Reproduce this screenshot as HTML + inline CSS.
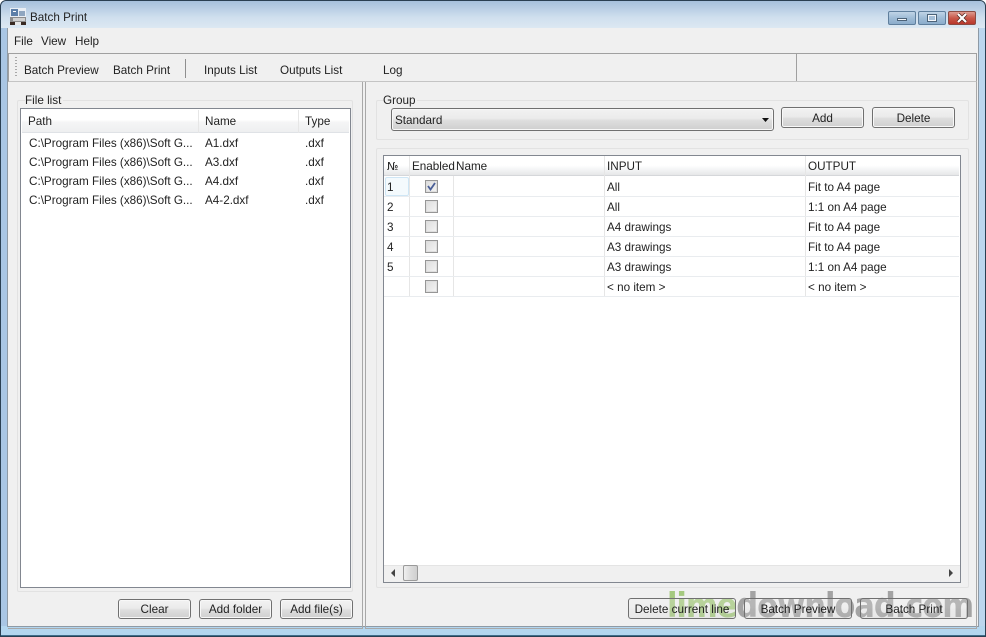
<!DOCTYPE html>
<html><head><meta charset="utf-8"><style>
*{box-sizing:border-box}
html,body{margin:0;padding:0;width:986px;height:637px;overflow:hidden;background:#fff}
body{position:relative;font:11.7px/14px "Liberation Sans","DejaVu Sans",sans-serif;color:#222}
div,span{position:absolute;white-space:nowrap}
.t{font-size:11.7px;line-height:14px;margin-top:1px}
.btn{border:1px solid #707070;border-radius:3px;background:linear-gradient(#f2f2f2 0,#ebebeb 45%,#dedede 55%,#cfcfcf 100%);text-align:center;font-size:11.7px;line-height:20px;height:20px;box-shadow:inset 0 0 0 1px #f8f8f8}
.wb{background:linear-gradient(rgba(242,242,242,.25),rgba(235,235,235,.25) 45%,rgba(222,222,222,.25) 55%,rgba(207,207,207,.25));box-shadow:none}
.box{border:1px solid #e2e2e2;border-radius:2px;background:#f0f0f0}
.hl{height:1px;background:#e9ecef}
.vl{width:1px;background:#e6e6e6}
.cb{width:13px;height:13px;border:1px solid #969696;background:linear-gradient(135deg,#dcdcdc,#f4f4f4);box-shadow:inset 0 0 0 1px #dedede}
</style></head><body>
<div style="left:0;top:0;width:986px;height:637px;border-radius:6px 6px 0 0;background:linear-gradient(90deg,#a9c6e4 0,#c5d9ec 40%,#bcd6ee 100%);border:1px solid #2a3f52"></div>
<div style="left:1px;top:1px;width:984px;height:27px;background:linear-gradient(#a6c0dc,#cfdfee 60%,#dce8f2);border-radius:6px 6px 0 0"></div>
<div style="left:1px;top:626px;width:984px;height:10px;background:#b3d6ef;border-bottom:1px solid #3f6d8a"></div>
<div style="left:7px;top:28px;width:972px;height:599px;background:#f0f0f0;border:1px solid #8e9aa5;border-top:none"></div>

<svg style="position:absolute;left:10px;top:8px" width="17" height="17" viewBox="0 0 17 17">
<rect x="0" y="0" width="16" height="17" fill="#e9eef4"/>
<rect x="1" y="1" width="7" height="7" fill="#5d7fa8"/><rect x="9" y="3" width="6" height="5" fill="#8fa6c0"/>
<rect x="3" y="3" width="3" height="1" fill="#fff"/><rect x="0" y="9" width="16" height="5" fill="#8c8c8c"/>
<rect x="3" y="10" width="12" height="3" fill="#d0d0d0"/><rect x="0" y="14" width="5" height="3" fill="#3a2a22"/><rect x="11" y="14" width="5" height="3" fill="#3a2a22"/><rect x="5" y="14" width="6" height="3" fill="#e8e8e8"/>
</svg>
<div class="t" style="left:30px;top:10px">Batch Print</div>

<div style="left:888px;top:11px;width:28px;height:14px;border:1px solid #5f7f9d;border-radius:2px;background:linear-gradient(#c0d4e6,#9fbcd6 50%,#8baccb)"></div>
<div style="left:897px;top:18px;width:10px;height:3px;background:#f4f7fa;border:1px solid #4c6379"></div>
<div style="left:918px;top:11px;width:28px;height:14px;border:1px solid #5f7f9d;border-radius:2px;background:linear-gradient(#c0d4e6,#9fbcd6 50%,#8baccb)"></div>
<div style="left:927px;top:14px;width:10px;height:8px;border:2px solid #f4f7fa;outline:1px solid #4c6379;outline-offset:-1px;background:#a5bfd8"></div>
<div style="left:948px;top:11px;width:28px;height:14px;border:1px solid #8a4a42;border-radius:2px;background:linear-gradient(#dd9a90,#c9584a 50%,#b8382c)"></div>
<svg style="position:absolute;left:956px;top:13px" width="12" height="10" viewBox="0 0 12 10"><path d="M2 1L10 9M10 1L2 9" stroke="#4d2620" stroke-width="3.6"/><path d="M2 1L10 9M10 1L2 9" stroke="#fff" stroke-width="2.2"/></svg>

<div class="t" style="left:14px;top:34px">File</div>
<div class="t" style="left:41px;top:34px">View</div>
<div class="t" style="left:75px;top:34px">Help</div>

<div style="left:8px;top:53px;width:969px;height:29px;border:1px solid #a0a0a0;border-bottom-color:#c4c4c4;background:#f0f0f0"></div>
<div style="left:15px;top:57px;width:2px;height:21px;background:repeating-linear-gradient(#a8a8a8 0 1px,#f0f0f0 1px 3px)"></div>
<div class="t" style="left:24px;top:63px">Batch Preview</div>
<div class="t" style="left:113px;top:63px">Batch Print</div>
<div style="left:185px;top:59px;width:1px;height:19px;background:#8f8f8f"></div>
<div class="t" style="left:204px;top:63px">Inputs List</div>
<div class="t" style="left:280px;top:63px">Outputs List</div>
<div class="t" style="left:383px;top:63px">Log</div>
<div style="left:796px;top:54px;width:1px;height:27px;background:#a0a0a0"></div>

<!-- splitter panes -->
<div style="left:8px;top:82px;width:355px;height:547px;border-right:1px solid #a8a8a8;border-bottom:1px solid #a8a8a8"></div>
<div style="left:365px;top:82px;width:612px;height:547px;border-left:1px solid #a8a8a8;border-right:1px solid #a8a8a8;border-bottom:1px solid #a8a8a8"></div>

<!-- file list -->
<div class="box" style="left:17px;top:100px;width:336px;height:492px"></div>
<div class="t" style="left:25px;top:93px;background:#f0f0f0;padding-right:2px">File list</div>
<div style="left:20px;top:108px;width:331px;height:480px;background:#fff;border:1px solid #828790"></div>
<div style="left:22px;top:110px;width:327px;height:23px;background:linear-gradient(#fff 0,#fff 45%,#f5f5f6 55%,#eeeff0);border-bottom:1px solid #dfe2e6"></div>
<div class="vl" style="left:198px;top:110px;height:23px"></div>
<div class="vl" style="left:298px;top:110px;height:23px"></div>
<div class="t" style="left:28px;top:114px">Path</div><div class="t" style="left:205px;top:114px">Name</div><div class="t" style="left:305px;top:114px">Type</div>
<div class="t" style="left:29px;top:136px">C:\Program Files (x86)\Soft G...</div><div class="t" style="left:205px;top:136px">A1.dxf</div><div class="t" style="left:305px;top:136px">.dxf</div>
<div class="t" style="left:29px;top:155px">C:\Program Files (x86)\Soft G...</div><div class="t" style="left:205px;top:155px">A3.dxf</div><div class="t" style="left:305px;top:155px">.dxf</div>
<div class="t" style="left:29px;top:174px">C:\Program Files (x86)\Soft G...</div><div class="t" style="left:205px;top:174px">A4.dxf</div><div class="t" style="left:305px;top:174px">.dxf</div>
<div class="t" style="left:29px;top:193px">C:\Program Files (x86)\Soft G...</div><div class="t" style="left:205px;top:193px">A4-2.dxf</div><div class="t" style="left:305px;top:193px">.dxf</div>

<div class="btn" style="left:118px;top:599px;width:73px">Clear</div>
<div class="btn" style="left:199px;top:599px;width:73px">Add folder</div>
<div class="btn" style="left:280px;top:599px;width:73px">Add file(s)</div>

<!-- group -->
<div class="box" style="left:376px;top:100px;width:593px;height:40px"></div>
<div class="t" style="left:383px;top:93px;background:#f0f0f0;padding-right:2px">Group</div>
<div class="btn" style="left:391px;top:108px;width:383px;height:23px;text-align:left;padding-left:3px;line-height:23px">Standard</div>
<svg style="position:absolute;left:761px;top:117px" width="9" height="6"><path d="M1 1h7L4.5 5z" fill="#111"/></svg>
<div class="btn" style="left:781px;top:107px;width:83px;height:21px;line-height:22px">Add</div>
<div class="btn" style="left:872px;top:107px;width:83px;height:21px;line-height:22px">Delete</div>

<!-- grid -->
<div class="box" style="left:376px;top:148px;width:593px;height:440px"></div>
<div style="left:383px;top:155px;width:578px;height:428px;background:#fff;border:1px solid #828790"></div>
<div style="left:384px;top:156px;width:575px;height:20px;background:linear-gradient(#fff,#fff 50%,#f4f5f6 70%,#e6e7e8);border-bottom:1px solid #d5d7da"></div>
<div class="vl" style="left:409px;top:156px;height:141px"></div>
<div class="vl" style="left:453px;top:176px;height:121px"></div>
<div class="vl" style="left:604px;top:156px;height:141px"></div>
<div class="vl" style="left:805px;top:156px;height:141px"></div>
<div class="t" style="left:387px;top:159px;font-family:'DejaVu Sans',sans-serif;font-size:11px">№</div>
<div class="t" style="left:412px;top:159px">Enabled</div>
<div class="t" style="left:456px;top:159px">Name</div>
<div class="t" style="left:607px;top:159px">INPUT</div>
<div class="t" style="left:808px;top:159px">OUTPUT</div>
<div class="hl" style="left:384px;top:196px;width:575px"></div>
<div class="hl" style="left:384px;top:216px;width:575px"></div>
<div class="hl" style="left:384px;top:236px;width:575px"></div>
<div class="hl" style="left:384px;top:256px;width:575px"></div>
<div class="hl" style="left:384px;top:276px;width:575px"></div>
<div class="hl" style="left:384px;top:296px;width:575px"></div>
<div style="left:385px;top:177px;width:24px;height:19px;border:1px solid #cfe6f5;border-radius:2px;background:#f4fafd"></div>

<div class="t" style="left:387px;top:180px">1</div><div class="cb" style="left:425px;top:180px"></div><div class="t" style="left:607px;top:180px">All</div><div class="t" style="left:808px;top:180px">Fit to A4 page</div>
<div class="t" style="left:387px;top:200px">2</div><div class="cb" style="left:425px;top:200px"></div><div class="t" style="left:607px;top:200px">All</div><div class="t" style="left:808px;top:200px">1:1 on A4 page</div>
<div class="t" style="left:387px;top:220px">3</div><div class="cb" style="left:425px;top:220px"></div><div class="t" style="left:607px;top:220px">A4 drawings</div><div class="t" style="left:808px;top:220px">Fit to A4 page</div>
<div class="t" style="left:387px;top:240px">4</div><div class="cb" style="left:425px;top:240px"></div><div class="t" style="left:607px;top:240px">A3 drawings</div><div class="t" style="left:808px;top:240px">Fit to A4 page</div>
<div class="t" style="left:387px;top:260px">5</div><div class="cb" style="left:425px;top:260px"></div><div class="t" style="left:607px;top:260px">A3 drawings</div><div class="t" style="left:808px;top:260px">1:1 on A4 page</div>
<div class="cb" style="left:425px;top:280px"></div><div class="t" style="left:607px;top:280px">&lt; no item &gt;</div><div class="t" style="left:808px;top:280px">&lt; no item &gt;</div>
<svg style="position:absolute;left:425px;top:180px" width="13" height="13"><path d="M3 6l2.5 3.5L10 3" fill="none" stroke="#4a5f97" stroke-width="1.8"/></svg>

<!-- scrollbar -->
<div style="left:384px;top:565px;width:576px;height:17px;background:#f0f0f0;border-top:1px solid #e4e4e4"></div>
<svg style="position:absolute;left:390px;top:569px" width="6" height="8"><path d="M5 0v8L1 4z" fill="#444"/></svg>
<svg style="position:absolute;left:948px;top:569px" width="6" height="8"><path d="M1 0v8l4-4z" fill="#444"/></svg>
<div style="left:403px;top:565px;width:15px;height:16px;border:1px solid #9a9a9a;border-radius:2px;background:linear-gradient(90deg,#f0f0f0,#dcdcdc 50%,#cfcfcf)"></div>

<div style="left:667px;top:585px;font:bold 34px/42px 'DejaVu Sans',sans-serif;letter-spacing:-1.2px;opacity:.75;transform-origin:0 0;transform:scaleX(.9);color:#8a8a8a"><span style="position:static;color:#8cbc5a">lime</span><span style="position:static;color:#8a8a8a">download.com</span></div>

<div class="btn wb" style="left:628px;top:598px;width:108px;height:21px;line-height:22px">Delete current line</div>
<div class="btn wb" style="left:744px;top:598px;width:108px;height:21px;line-height:22px">Batch Preview</div>
<div class="btn wb" style="left:860px;top:598px;width:108px;height:21px;line-height:22px">Batch Print</div>
</body></html>
